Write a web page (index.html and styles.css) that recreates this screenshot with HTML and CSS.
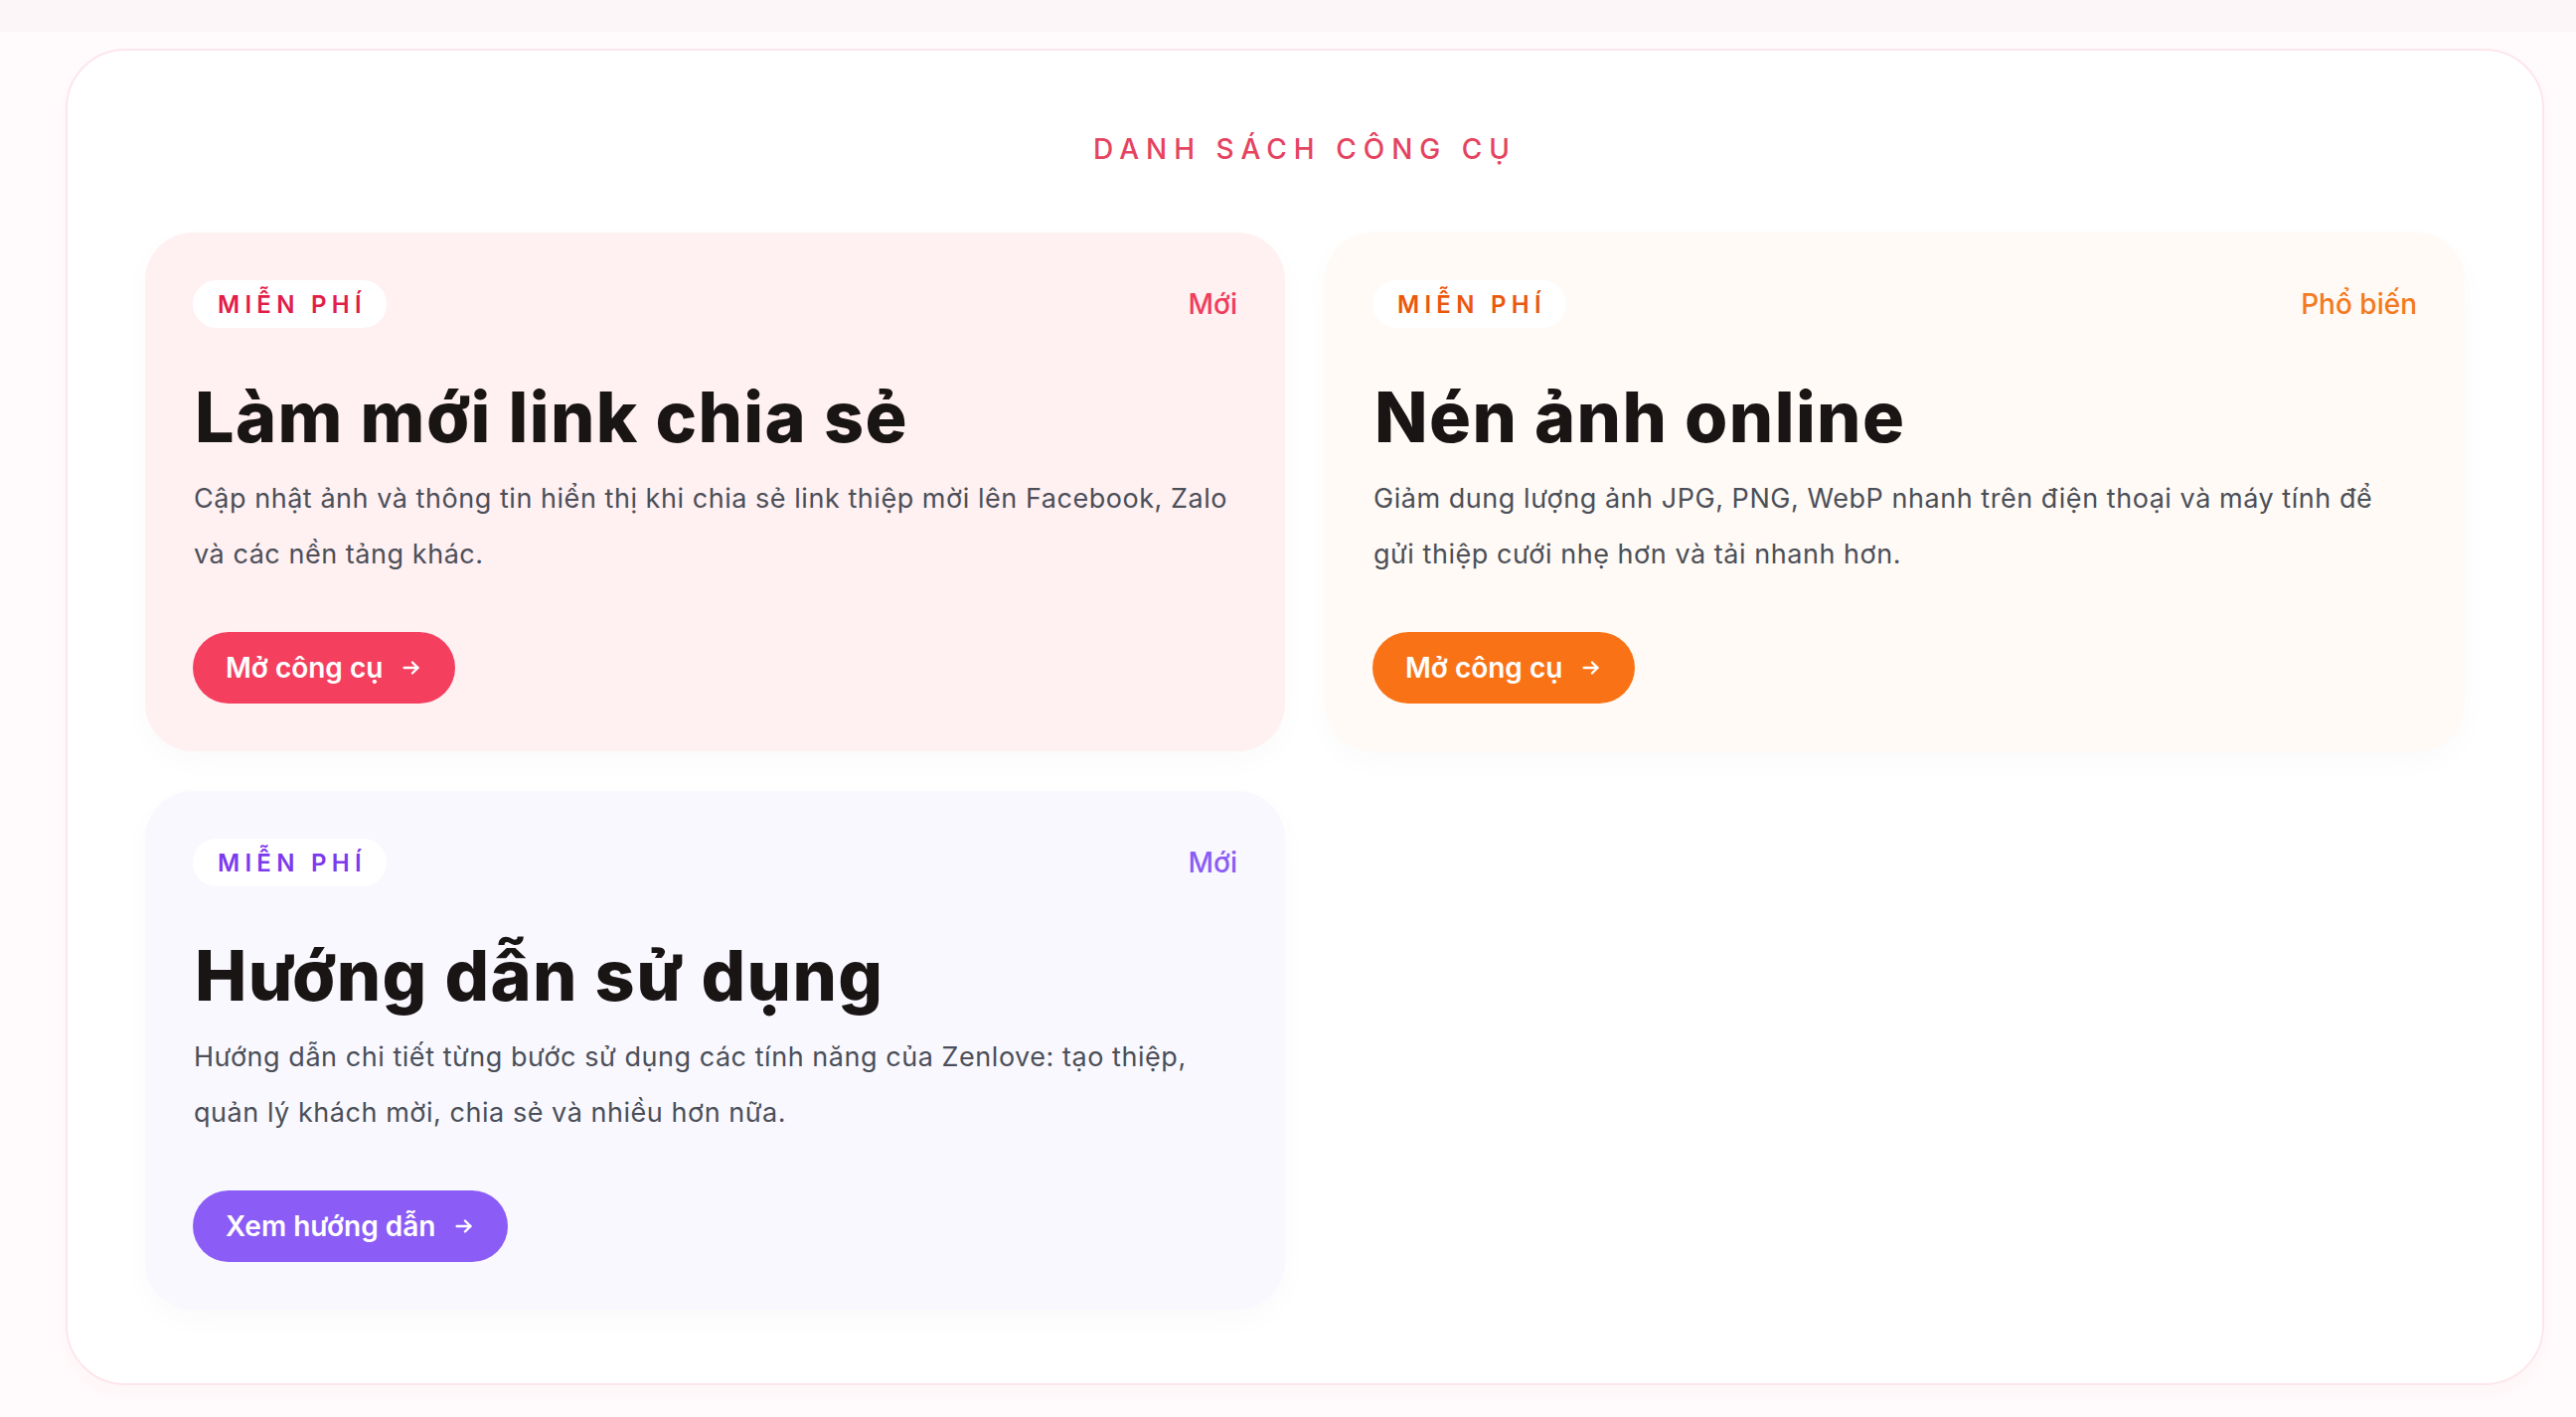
FILE: index.html
```html
<!DOCTYPE html>
<html lang="vi">
<head>
<meta charset="utf-8">
<title>Danh sách công cụ</title>
<link rel="stylesheet" href="styles.css">
</head>
<body>
<div class="topband"></div>
<section class="tools">
  <h2 class="tools-title">DANH SÁCH CÔNG CỤ</h2>
  <div class="grid">
    <article class="card card-rose">
      <div class="card-head">
        <span class="badge">MIỄN PHÍ</span>
        <span class="tag">Mới</span>
      </div>
      <h3 class="card-title">Làm mới link chia sẻ</h3>
      <p class="card-desc">Cập nhật ảnh và thông tin hiển thị khi chia sẻ link thiệp mời lên Facebook, Zalo và các nền tảng khác.</p>
      <a class="btn" href="#">Mở công cụ
        <svg class="arrow" viewBox="0 0 24 24" fill="none" stroke="currentColor" stroke-width="2.6" stroke-linecap="round" stroke-linejoin="round"><path d="M4 12h15"/><path d="M13 6l6 6-6 6"/></svg>
      </a>
    </article>
    <article class="card card-orange">
      <div class="card-head">
        <span class="badge">MIỄN PHÍ</span>
        <span class="tag">Phổ biến</span>
      </div>
      <h3 class="card-title">Nén ảnh online</h3>
      <p class="card-desc">Giảm dung lượng ảnh JPG, PNG, WebP nhanh trên điện thoại và máy tính để gửi thiệp cưới nhẹ hơn và tải nhanh hơn.</p>
      <a class="btn" href="#">Mở công cụ
        <svg class="arrow" viewBox="0 0 24 24" fill="none" stroke="currentColor" stroke-width="2.6" stroke-linecap="round" stroke-linejoin="round"><path d="M4 12h15"/><path d="M13 6l6 6-6 6"/></svg>
      </a>
    </article>
    <article class="card card-violet">
      <div class="card-head">
        <span class="badge">MIỄN PHÍ</span>
        <span class="tag">Mới</span>
      </div>
      <h3 class="card-title">Hướng dẫn sử dụng</h3>
      <p class="card-desc">Hướng dẫn chi tiết từng bước sử dụng các tính năng của Zenlove: tạo thiệp, quản lý khách mời, chia sẻ và nhiều hơn nữa.</p>
      <a class="btn" href="#">Xem hướng dẫn
        <svg class="arrow" viewBox="0 0 24 24" fill="none" stroke="currentColor" stroke-width="2.6" stroke-linecap="round" stroke-linejoin="round"><path d="M4 12h15"/><path d="M13 6l6 6-6 6"/></svg>
      </a>
    </article>
  </div>
</section>
</body>
</html>
```

FILE: styles.css
```css
* { box-sizing: border-box; }

html, body {
  margin: 0;
  padding: 0;
}

body {
  background: #fffbfc;
  font-family: Inter, "Noto Sans", "Liberation Sans", sans-serif;
  color: #1c1917;
  height: 1426px;
  overflow: hidden;
}

.topband {
  height: 32px;
  background: #fdf6f8;
}

.tools {
  margin: 17px 32px 0 66px;
  background: #ffffff;
  border: 2px solid #fde6eb;
  border-radius: 60px;
  padding: 78px 78px 74px;
  box-shadow: 0 8px 24px rgba(244, 63, 94, 0.03);
}

.tools-title {
  margin: 0 0 63px;
  text-align: center;
  font-size: 28px;
  line-height: 42px;
  font-weight: 500;
  letter-spacing: 0.25em;
  color: #e5435f;
}

.grid {
  display: grid;
  grid-template-columns: 1fr 1fr;
  gap: 40px;
}

.card {
  border-radius: 48px;
  padding: 48px;
  display: flex;
  flex-direction: column;
  align-items: flex-start;
  box-shadow: 0 10px 30px rgba(0, 0, 0, 0.025);
}

.card-rose { background: #fff0f2; }
.card-orange { background: #fffaf5; }
.card-violet { background: #f9f8ff; }

.card-head {
  width: 100%;
  height: 48px;
  display: flex;
  align-items: center;
  justify-content: space-between;
}

.badge {
  display: inline-flex;
  align-items: center;
  height: 48px;
  padding: 0 20px 0 25px;
  background: #ffffff;
  border-radius: 24px;
  font-size: 24px;
  font-weight: 600;
  letter-spacing: 0.22em;
}

.tag {
  font-size: 28px;
  font-weight: 500;
}

.card-rose .badge { color: #e11d48; }
.card-rose .tag { color: #ef3e5c; }
.card-orange .badge { color: #ea580c; }
.card-orange .tag { color: #f47a1f; }
.card-violet .badge { color: #7c3aed; }
.card-violet .tag { color: #8b5cf6; }

.card-title {
  margin: 51px 0 0 2px;
  font-size: 70px;
  line-height: 77px;
  font-weight: 800;
  letter-spacing: 0.02em;
  color: #1a1515;
}

.card-desc {
  margin: 16px 0 0 1px;
  font-size: 27px;
  line-height: 56px;
  font-weight: 400;
  letter-spacing: 0.02em;
  color: #4b4f58;
}

.btn {
  margin-top: 50px;
  display: inline-flex;
  align-items: center;
  gap: 18px;
  height: 72px;
  padding: 0 33px;
  border-radius: 36px;
  color: #ffffff;
  text-decoration: none;
  font-size: 28px;
  font-weight: 600;
}

.arrow {
  width: 22px;
  height: 22px;
}

.card-rose .btn { background: #f43f5e; }
.card-orange .btn { background: #f97316; }
.card-violet .btn { background: #8b5cf6; }
```
